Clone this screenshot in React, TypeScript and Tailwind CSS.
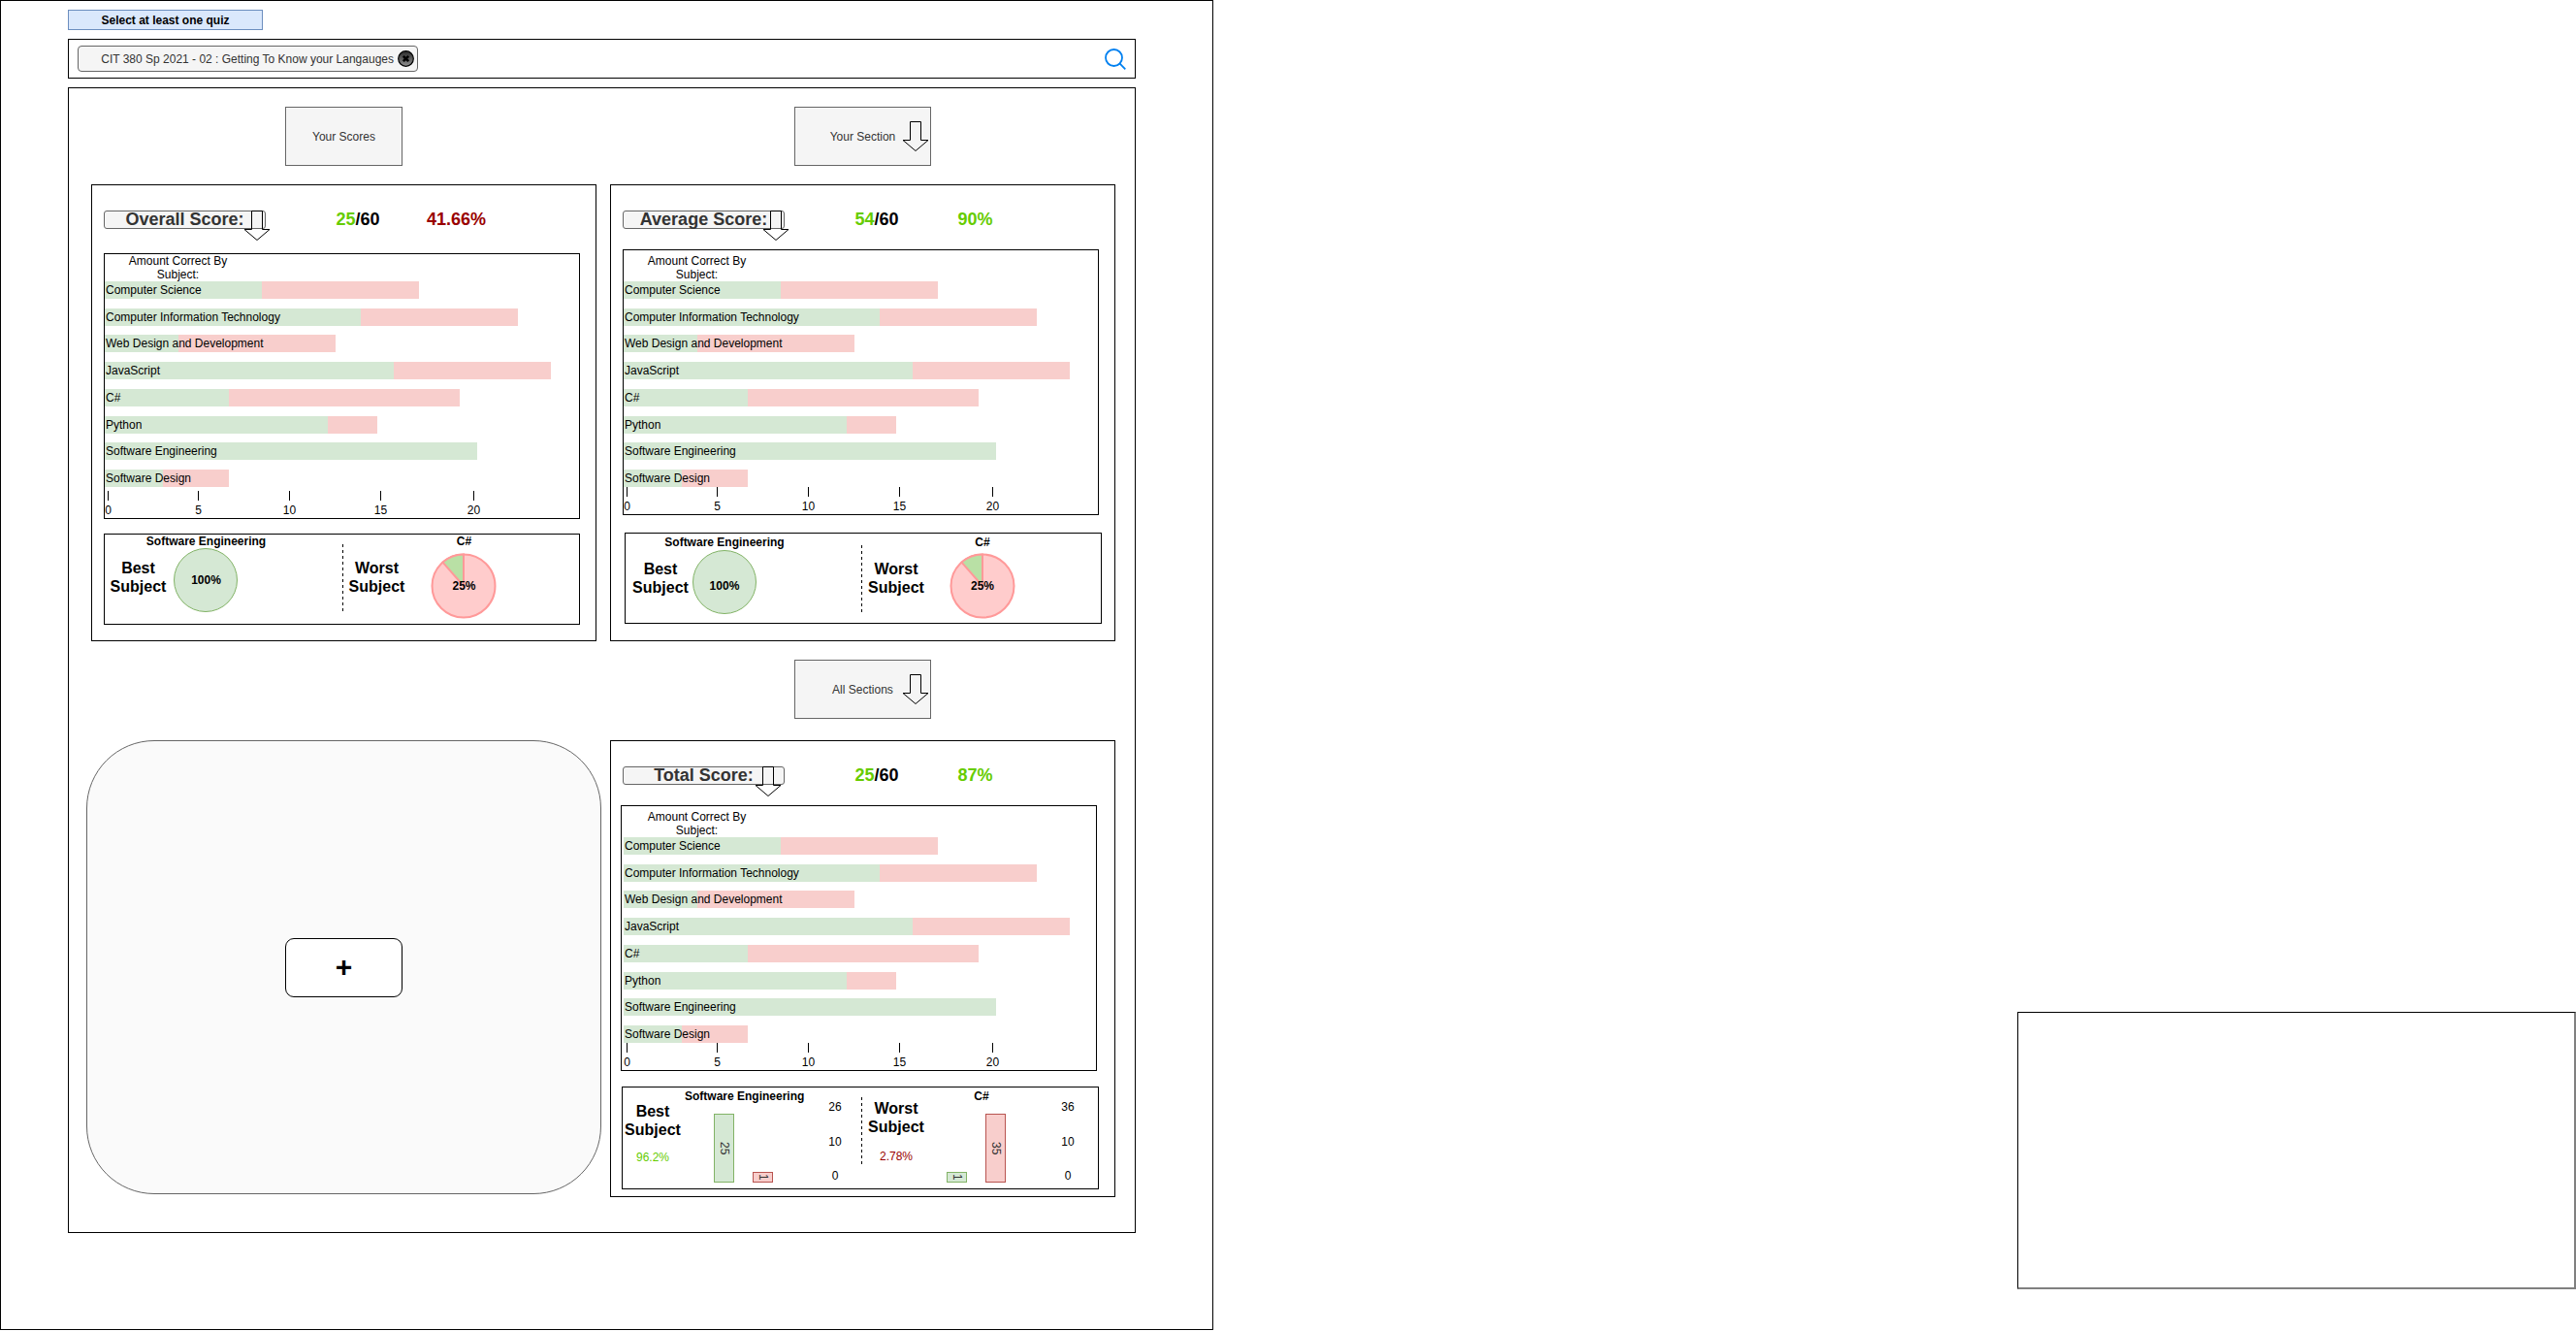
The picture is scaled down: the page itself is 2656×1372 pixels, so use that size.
import type { ReactNode } from "react";

type Bar = { label: string; correct: number; wrong: number };

const PLOT_WIDTH = 489;

const bars: Bar[] = [
  { label: "Computer Science", correct: 162, wrong: 162 },
  { label: "Computer Information Technology", correct: 264, wrong: 162 },
  { label: "Web Design and Development", correct: 76, wrong: 162 },
  { label: "JavaScript", correct: 298, wrong: 162 },
  { label: "C#", correct: 128, wrong: 238 },
  { label: "Python", correct: 230, wrong: 51 },
  { label: "Software Engineering", correct: 384, wrong: 0 },
  { label: "Software Design", correct: 60, wrong: 68 },
];

const ticks = [0, 5, 10, 15, 20];

const percent = (value: number) => `${(value / PLOT_WIDTH) * 100}%`;

function DownArrow({ className }: { className: string }) {
  return (
    <svg
      viewBox="0 0 28 31"
      aria-hidden="true"
      className={`pointer-events-none absolute h-[31px] w-7 ${className}`}
      fill="none"
      stroke="#000"
    >
      <path d="M8.5 0.5H19.5V19.5H27L14 30.5L1 19.5H8.5Z" />
    </svg>
  );
}

function SectionButton({ children }: { children: ReactNode }) {
  return (
    <button
      type="button"
      className="relative h-[61px] w-[141px] justify-self-center border border-[#666] bg-[#f5f5f5] text-[#333]"
    >
      {children}
      <DownArrow className="right-px top-3.5" />
    </button>
  );
}

function ScoreRow({
  title,
  score,
  rate,
  rateClass,
  arrowClass,
}: {
  title: string;
  score: number;
  rate: string;
  rateClass: string;
  arrowClass: string;
}) {
  return (
    <div className="grid grid-cols-[167fr_45fr_100fr_103fr_92fr] pl-3 text-lg/[19px] font-bold">
      <button
        type="button"
        className="relative h-[19px] rounded-[3px] border border-[#666] bg-[#f5f5f5] leading-[17px] text-[#333]"
      >
        {title}
        <DownArrow className={arrowClass} />
      </button>
      <p className="col-start-3 text-center">
        <span className="text-[#66cc00]">{score}</span>/60
      </p>
      <p className={`text-center ${rateClass}`}>{rate}</p>
    </div>
  );
}

function SubjectChart({
  boxClass,
  plotClass,
  axisClass,
}: {
  boxClass: string;
  plotClass: string;
  axisClass: string;
}) {
  return (
    <section className={`border border-black pb-px ${boxClass}`}>
      <div className={plotClass}>
        <h3 className="w-[151px] text-center">
          Amount Correct By
          <br />
          Subject:
        </h3>
        <ul className="flex h-[212px] flex-col justify-between">
          {bars.map((bar) => (
            <li key={bar.label} className="relative flex h-[18px]">
              <div className="bg-[#d5e8d4]" style={{ width: percent(bar.correct) }} />
              <div className="bg-[#f8cecc]" style={{ width: percent(bar.wrong) }} />
              <span className="absolute left-px leading-[18px]">{bar.label}</span>
            </li>
          ))}
        </ul>
        <div className={`grid grid-cols-[93fr_94fr_94fr_96fr_112fr] ${axisClass}`}>
          {ticks.map((tick) => (
            <div key={tick} className="flex w-[7px] flex-col items-center gap-[3px]">
              <span className="h-2.5 w-px bg-black" />
              <span>{tick}</span>
            </div>
          ))}
        </div>
      </div>
    </section>
  );
}

function SubjectLabel({
  kind,
  className,
  children,
}: {
  kind: string;
  className: string;
  children?: ReactNode;
}) {
  return (
    <div className={`flex min-w-0 flex-col items-center text-center ${className}`}>
      <h3 className="text-base/[19px] font-bold">
        {kind}
        <br />
        Subject
      </h3>
      {children}
    </div>
  );
}

function Divider() {
  return (
    <svg aria-hidden="true" className="mt-2.5 h-[70px] w-px" viewBox="0 0 1 70" preserveAspectRatio="none">
      <path d="M0.5 0V70" stroke="#000" strokeDasharray="3 3" />
    </svg>
  );
}

function PieSummary({
  boxClass,
  labelClass,
  bestClass,
  bestTextClass,
  worstClass,
}: {
  boxClass: string;
  labelClass: string;
  bestClass: string;
  bestTextClass: string;
  worstClass: string;
}) {
  return (
    <section className={`grid h-[94px] border border-black ${boxClass}`}>
      <SubjectLabel kind="Best" className={labelClass} />
      <div className="flex min-w-0 flex-col items-center font-bold">
        <p className="whitespace-nowrap">Software Engineering</p>
        <div
          className={`flex size-[66px] shrink-0 items-center justify-center rounded-full border border-[#82b366] bg-[#d5e8d4] ${bestClass}`}
        >
          <span className={bestTextClass}>100%</span>
        </div>
      </div>
      <div className="col-start-4">
        <Divider />
      </div>
      <SubjectLabel kind="Worst" className={labelClass} />
      <div className="flex min-w-0 flex-col items-center font-bold">
        <p>C#</p>
        <div className={`relative flex size-[68px] shrink-0 items-center justify-center ${worstClass}`}>
          <svg viewBox="0 0 68 68" aria-hidden="true" className="absolute inset-0" stroke="#ff9999" strokeWidth="2">
            <circle cx="34" cy="34" r="32.5" fill="#ffcccc" />
            <path d="M34 34V1.5A32.5 32.5 0 0 0 12.5 9.6Z" fill="#b9e0a5" />
          </svg>
          <span className="relative">25%</span>
        </div>
      </div>
    </section>
  );
}

function Column({ tone, height, value }: { tone: "good" | "bad"; height: string; value: number }) {
  const color = tone === "good" ? "border-[#82b366] bg-[#d5e8d4]" : "border-[#b85450] bg-[#f8cecc]";
  return (
    <div className={`flex w-[21px] items-center justify-center border ${height} ${color}`}>
      <span className="leading-[19px] text-[#333] [writing-mode:vertical-rl]">{value}</span>
    </div>
  );
}

function AxisLabels({ values }: { values: number[] }) {
  return (
    <div className="flex flex-col items-center justify-between pb-1.5 pt-[13px]">
      {values.map((value) => (
        <span key={value}>{value}</span>
      ))}
    </div>
  );
}

function ColumnSummary() {
  return (
    <section className="ml-[11px] mr-4 mt-4 grid h-[106px] grid-cols-[62fr_130fr_54fr_1px_70fr_111fr_62fr] border border-black">
      <SubjectLabel kind="Best" className="pt-[15px]">
        <p className="mt-3 text-[#66cc00]">96.2%</p>
      </SubjectLabel>
      <div className="min-w-0 pt-0.5">
        <p className="whitespace-nowrap pl-[2px] font-bold">Software Engineering</p>
        <div className="mt-[11px] flex items-end gap-[19px] pl-8">
          <Column tone="good" height="h-[71px]" value={25} />
          <Column tone="bad" height="h-[11px]" value={1} />
        </div>
      </div>
      <AxisLabels values={[26, 10, 0]} />
      <Divider />
      <SubjectLabel kind="Worst" className="pt-3">
        <p className="mt-3.5 text-[#990000]">2.78%</p>
      </SubjectLabel>
      <div className="min-w-0 pt-0.5">
        <p className="pr-[5px] text-center font-bold">C#</p>
        <div className="mt-[11px] flex items-end gap-[19px] pl-[17px]">
          <Column tone="good" height="h-[11px]" value={1} />
          <Column tone="bad" height="h-[71px]" value={35} />
        </div>
      </div>
      <AxisLabels values={[36, 10, 0]} />
    </section>
  );
}

function CloseIcon() {
  return (
    <svg viewBox="0 0 17 17" aria-hidden="true" className="size-[17px]">
      <defs>
        <linearGradient id="close-fill" x1="0" y1="0" x2="0" y2="1">
          <stop offset="0" stopColor="#2a2a2a" />
          <stop offset="1" stopColor="#909090" />
        </linearGradient>
      </defs>
      <circle cx="8.5" cy="8.5" r="7.8" fill="url(#close-fill)" stroke="#000" strokeWidth="1.2" />
      <path d="M5.8 5.8L11.2 11.2M11.2 5.8L5.8 11.2" stroke="#000" strokeWidth="2.6" />
    </svg>
  );
}

export default function App() {
  return (
    <div className="flex items-start justify-between bg-white font-['Liberation_Sans',Arial,sans-serif] text-xs/[14px] text-black">
      <main className="w-[47.1%] border border-black pb-[99px] pl-[69px] pr-[79px] pt-[9px]">
        <button
          type="button"
          className="block h-[21px] w-[201px] border border-[#6c8ebf] bg-[#dae8fc] font-bold"
        >
          Select at least one quiz
        </button>

        <form className="mt-[9px] flex h-[41px] items-center border border-black px-[9px]">
          <div className="flex h-[27px] w-[351px] shrink-0 items-center justify-end gap-1 rounded-[4px] border border-[#666] bg-[#f5f5f5] pr-[3px] text-[#333]">
            <span className="whitespace-nowrap">CIT 380 Sp 2021 - 02 : Getting To Know your Langauges</span>
            <button type="button" aria-label="Remove quiz">
              <CloseIcon />
            </button>
          </div>
          <input type="text" aria-label="Search quizzes" className="h-full min-w-0 flex-1 px-2 outline-none" />
          <button type="submit" aria-label="Search">
            <svg viewBox="0 0 22 22" className="size-[22px]" fill="none" stroke="#0080f0" strokeWidth="1.8">
              <circle cx="9.5" cy="9.5" r="8.5" />
              <path d="M15.2 15.2L21.3 21.3" />
            </svg>
          </button>
        </form>

        <div className="mt-[9px] grid grid-cols-2 gap-x-3.5 gap-y-[19px] border border-black pb-9 pl-[23px] pr-5 pt-[19px]">
          <div className="flex h-[61px] w-[121px] items-center justify-center justify-self-center border border-[#666] bg-[#f5f5f5] text-[#333]">
            Your Scores
          </div>
          <SectionButton>Your Section</SectionButton>

          <article className="border border-black pb-4 pt-[26px]">
            <ScoreRow
              title="Overall Score:"
              score={25}
              rate="41.66%"
              rateClass="text-[#990000]"
              arrowClass="-right-1.5 -top-px"
            />
            <SubjectChart boxClass="mt-[25px] ml-3 mr-4" plotClass="" axisClass="mt-1" />
            <PieSummary
              boxClass="mt-[15px] ml-3 mr-4 grid-cols-[69fr_71fr_105fr_1px_69fr_111fr_63fr]"
              labelClass="pt-[25px]"
              bestClass=""
              bestTextClass=""
              worstClass="mt-[5px]"
            />
          </article>

          <article className="border border-black pb-[17px] pt-[26px]">
            <ScoreRow
              title="Average Score:"
              score={54}
              rate="90%"
              rateClass="text-[#66cc00]"
              arrowClass="-right-1.5 -top-px"
            />
            <SubjectChart boxClass="mt-[21px] ml-3 mr-4 pt-1" plotClass="" axisClass="" />
            <PieSummary
              boxClass="mt-[18px] ml-3.5 mr-[13px] pt-0.5 grid-cols-[72fr_60fr_111fr_1px_70fr_108fr_68fr]"
              labelClass="pt-[25px]"
              bestClass="mt-px"
              bestTextClass="pt-2"
              worstClass="mt-1"
            />
          </article>

          <div className="col-start-2 grid">
            <SectionButton>All Sections</SectionButton>
          </div>

          <article className="-mx-[5px] mb-[3px] mt-[3px] flex items-center justify-center rounded-[70px] border border-[#666] bg-[#fafafa]">
            <button
              type="button"
              aria-label="Add a section"
              className="h-[61px] w-[121px] rounded-[9px] border border-black bg-white text-3xl font-bold"
            >
              +
            </button>
          </article>

          <article className="mt-[3px] border border-black pb-[7px] pt-[26px]">
            <ScoreRow
              title="Total Score:"
              score={25}
              rate="87%"
              rateClass="text-[#66cc00]"
              arrowClass="right-0.5 -top-px"
            />
            <SubjectChart boxClass="mt-[21px] ml-2.5 mr-[18px] pt-1" plotClass="ml-0.5 -mr-0.5" axisClass="" />
            <ColumnSummary />
          </article>
        </div>
      </main>

      <aside className="mt-[1043px] h-[286px] w-[21.7%] border border-b-2 border-r-2 border-black border-b-[#808080] border-r-[#808080]" />
    </div>
  );
}
